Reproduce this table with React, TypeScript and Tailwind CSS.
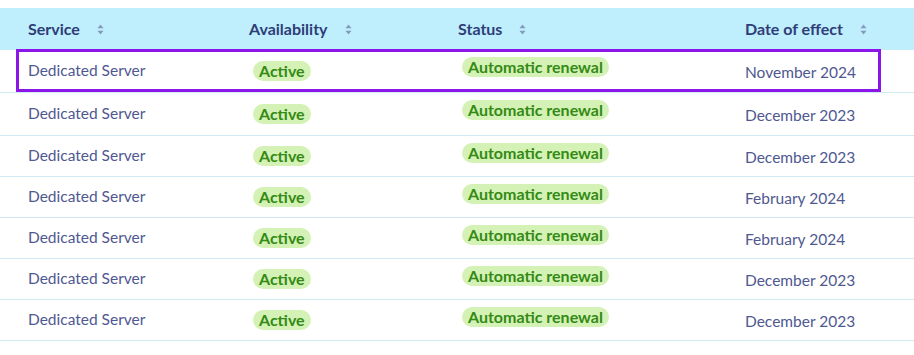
import React from "react";

type Row = {
  service: string;
  availability: string;
  status: string;
  date: string;
};

const rows: Row[] = [
  { service: "Dedicated Server", availability: "Active", status: "Automatic renewal", date: "November 2024" },
  { service: "Dedicated Server", availability: "Active", status: "Automatic renewal", date: "December 2023" },
  { service: "Dedicated Server", availability: "Active", status: "Automatic renewal", date: "December 2023" },
  { service: "Dedicated Server", availability: "Active", status: "Automatic renewal", date: "February 2024" },
  { service: "Dedicated Server", availability: "Active", status: "Automatic renewal", date: "February 2024" },
  { service: "Dedicated Server", availability: "Active", status: "Automatic renewal", date: "December 2023" },
  { service: "Dedicated Server", availability: "Active", status: "Automatic renewal", date: "December 2023" },
];

const SortIcon = () => (
  <svg width="7" height="11" viewBox="0 0 7 11" className="ml-[17px]">
    <path d="M3.5 0.5 L6.5 4.3 L0.5 4.3 Z" fill="#8599bf" />
    <path d="M3.5 10.5 L6.5 6.7 L0.5 6.7 Z" fill="#8599bf" />
  </svg>
);

const cols = "grid grid-cols-[221px_209px_287px_1fr] px-[28px]";

const Badge = ({ children }: { children: React.ReactNode }) => (
  <span className="inline-flex h-[20px] items-center rounded-full bg-[#d5f2b6] px-[6px] text-[16px] font-bold leading-none text-[#338a14]">
    {children}
  </span>
);

export default function App() {
  return (
    <div className="bg-white pt-[8px] font-['Lato',sans-serif]" style={{ width: 914, height: 355 }}>
      {/* header */}
      <div className={`${cols} h-[42px] items-center bg-[#bfeefc] text-[16px] font-bold text-[#2e3d78]`}>
        {["Service", "Availability", "Status", "Date of effect"].map((h) => (
          <div key={h} className="flex items-center">
            <span>{h}</span>
            <SortIcon />
          </div>
        ))}
      </div>

      {/* body */}
      {rows.map((r, i) => (
        <div
          key={i}
          className={`${cols} relative ${i < 2 ? "h-[43px]" : "h-[41px]"} items-center border-b border-[#cfeaf4] text-[15.5px] text-[#4f5890]`}
        >
          <div>{r.service}</div>
          <div className="pl-[4px] pt-[1px]">
            <Badge>{r.availability}</Badge>
          </div>
          <div className="self-start pl-[4px] pt-[6px]">
            <Badge>{r.status}</Badge>
          </div>
          <div className="pt-[3px]">{r.date}</div>
          {i === 0 && (
            <div className="pointer-events-none absolute left-[16px] top-[-1px] h-[43px] w-[865px] border-[3px] border-[#8c16e8]" />
          )}
        </div>
      ))}
    </div>
  );
}
